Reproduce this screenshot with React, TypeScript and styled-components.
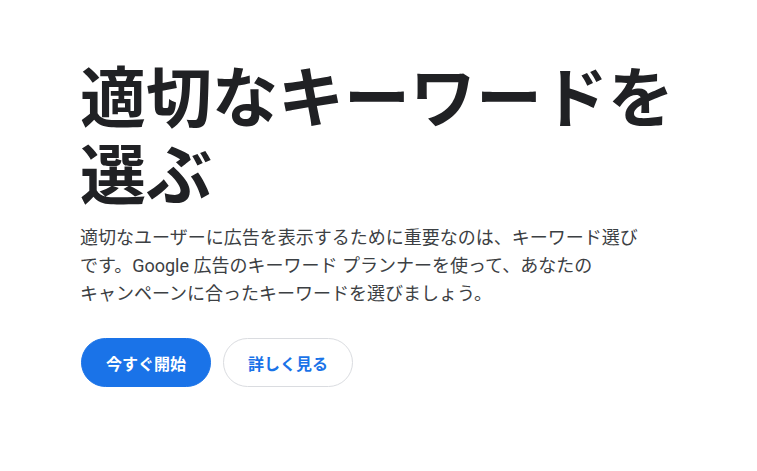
import React from 'react';
import styled, { createGlobalStyle } from 'styled-components';

const GlobalStyle = createGlobalStyle`
  html, body {
    margin: 0;
    padding: 0;
    background: #ffffff;
  }
  body {
    font-family: Roboto, "Noto Sans CJK JP", "Noto Sans", sans-serif;
    -webkit-font-smoothing: antialiased;
  }
`;

const Hero = styled.section`
  display: flex;
  flex-direction: column;
  align-items: flex-start;
  padding: 55px 0 0 80px;
`;

const Title = styled.h1`
  margin: 0;
  font-family: "Noto Sans CJK JP", "Noto Sans", sans-serif;
  font-size: 66px;
  line-height: 77px;
  font-weight: 700;
  color: #202124;
  letter-spacing: 0;
`;

const Lead = styled.p`
  margin: 15px 0 0;
  font-family: Roboto, "Noto Sans CJK JP", sans-serif;
  font-size: 18px;
  line-height: 28px;
  font-weight: 400;
  color: #3c4043;
`;

const Actions = styled.div`
  display: flex;
  gap: 12px;
  margin-top: 30px;
  padding-left: 1px;
`;

const Button = styled.button<{ $primary?: boolean }>`
  height: 49px;
  width: 130px;
  padding: 0;
  border-radius: 25px;
  font-family: Roboto, "Noto Sans CJK JP", sans-serif;
  font-size: 16px;
  font-weight: 700;
  cursor: pointer;
  border: 1px solid ${(p) => (p.$primary ? '#1a73e8' : '#dadce0')};
  background: ${(p) => (p.$primary ? '#1a73e8' : '#ffffff')};
  color: ${(p) => (p.$primary ? '#ffffff' : '#1a73e8')};
`;

export default function App() {
  return (
    <>
      <GlobalStyle />
      <Hero>
        <Title>
          適切なキーワードを
          <br />
          選ぶ
        </Title>
        <Lead>
          適切なユーザーに広告を表示するために重要なのは、キーワード選び
          <br />
          です。Google 広告のキーワード プランナーを使って、あなたの
          <br />
          キャンペーンに合ったキーワードを選びましょう。
        </Lead>
        <Actions>
          <Button $primary>今すぐ開始</Button>
          <Button>詳しく見る</Button>
        </Actions>
      </Hero>
    </>
  );
}
